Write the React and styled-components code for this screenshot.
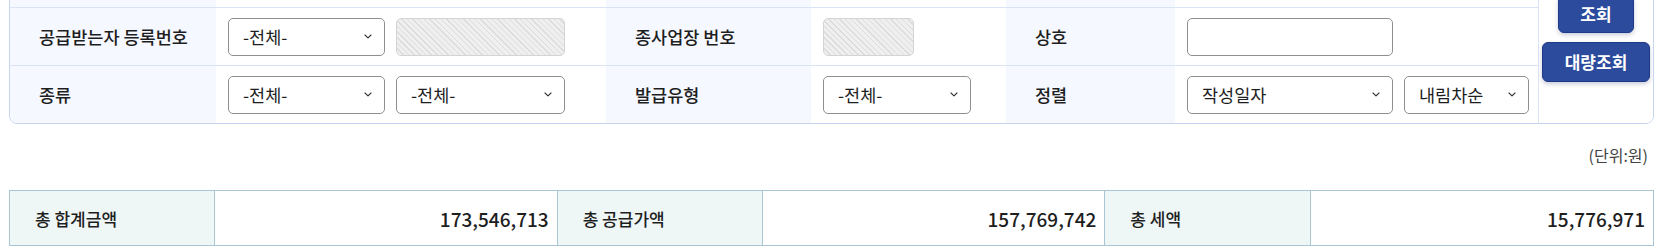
import React from "react"
import styled, { createGlobalStyle } from "styled-components"

const GlobalStyle = createGlobalStyle`
  html, body { margin: 0; padding: 0; background: #fff; }
  body {
    font-family: "Noto Sans CJK KR", "Noto Sans", sans-serif;
    color: #222;
    overflow: hidden;
  }
`

const Chevron = () => (
  <svg width="8" height="5" viewBox="0 0 8 5" fill="none">
    <polyline points="1,1 4,3.8 7,1" stroke="#333" strokeWidth="1.1" strokeLinecap="round" strokeLinejoin="round" />
  </svg>
)

const App = () => {
  return (
    <Page>
      <GlobalStyle />
      <Panel>
        <Rows>
          <Row>
            <Label />
            <Cell />
            <Label />
            <Cell />
            <Label />
            <Cell />
          </Row>
          <Row>
            <Label>공급받는자 등록번호</Label>
            <Cell>
              <Select w={157}><span>-전체-</span><Chevron /></Select>
              <Hatched w={169} />
            </Cell>
            <Label>종사업장 번호</Label>
            <Cell>
              <Hatched w={91} />
            </Cell>
            <Label>상호</Label>
            <Cell>
              <TextInput w={206} />
            </Cell>
          </Row>
          <Row last>
            <Label>종류</Label>
            <Cell>
              <Select w={157}><span>-전체-</span><Chevron /></Select>
              <Select w={169}><span>-전체-</span><Chevron /></Select>
            </Cell>
            <Label>발급유형</Label>
            <Cell>
              <Select w={148}><span>-전체-</span><Chevron /></Select>
            </Cell>
            <Label>정렬</Label>
            <Cell>
              <Select w={206}><span>작성일자</span><Chevron /></Select>
              <Select w={125}><span>내림차순</span><Chevron /></Select>
            </Cell>
          </Row>
        </Rows>
        <ButtonCol>
          <Button w={76} h={38}>조회</Button>
          <Button w={108} h={40}>대량조회</Button>
        </ButtonCol>
      </Panel>
      <Unit>(단위:원)</Unit>
      <Summary>
        <SumLabel>총 합계금액</SumLabel>
        <SumValue>173,546,713</SumValue>
        <SumLabel>총 공급가액</SumLabel>
        <SumValue>157,769,742</SumValue>
        <SumLabel>총 세액</SumLabel>
        <SumValue last>15,776,971</SumValue>
      </Summary>
    </Page>
  )
}
export default App

const Page = styled.div`
  width: 1660px;
  height: 250px;
  padding: 0 6px 0 9px;
  box-sizing: border-box;
  overflow: hidden;
`
const Panel = styled.div`
  margin-top: -51px;
  display: flex;
  border: 1px solid #c6d4ef;
  border-radius: 8px;
  overflow: hidden;
`
const Rows = styled.div`
  flex: 1;
  display: flex;
  flex-direction: column;
`
const Row = styled.div`
  display: grid;
  grid-template-columns: 206px 390px 205px 195px 169px 1fr;
  height: 57px;
  border-bottom: ${(p) => (p.last ? "none" : "1px solid #dbe4f6")};
`
const Label = styled.div`
  background: #f5f8fe;
  display: flex;
  align-items: center;
  padding-left: 29px;
  font-size: 17.5px;
  font-weight: 500;
  color: #1e1e1e;
  white-space: nowrap;
`
const Cell = styled.div`
  background: #fff;
  display: flex;
  align-items: center;
  gap: 11px;
  padding-left: 12px;
`
const Select = styled.div`
  width: ${(p) => p.w}px;
  height: 38px;
  box-sizing: border-box;
  border: 1px solid #8f8f8f;
  border-radius: 5px;
  background: #fff;
  display: flex;
  align-items: center;
  justify-content: space-between;
  padding: 0 12px 0 14px;
  font-size: 17.5px;
  color: #1e1e1e;
  span { line-height: 1; }
`
const Hatched = styled.div`
  width: ${(p) => p.w}px;
  height: 38px;
  box-sizing: border-box;
  border: 1px solid #d4d4d4;
  border-radius: 5px;
  background: repeating-linear-gradient(45deg, #dcdcdc 0 1px, #efefef 1px 4px);
`
const TextInput = styled.div`
  width: ${(p) => p.w}px;
  height: 38px;
  box-sizing: border-box;
  border: 1px solid #8f8f8f;
  border-radius: 5px;
  background: #fff;
`
const ButtonCol = styled.div`
  width: 114px;
  border-left: 1px solid #dbe4f6;
  display: flex;
  flex-direction: column;
  align-items: center;
  justify-content: center;
  gap: 9px;
  padding-top: 3px;
  background: #fff;
`
const Button = styled.div`
  width: ${(p) => p.w}px;
  height: ${(p) => p.h}px;
  box-sizing: border-box;
  background: #2c4b9d;
  border: 1px solid #1f3a86;
  border-radius: 6px;
  box-shadow: 0 2px 4px rgba(30, 50, 110, 0.25);
  color: #fff;
  font-size: 17px;
  font-weight: 700;
  display: flex;
  align-items: center;
  justify-content: center;
`
const Unit = styled.div`
  margin-top: 21px;
  height: 20px;
  line-height: 20px;
  text-align: right;
  padding-right: 6px;
  font-size: 16px;
  color: #444;
`
const Summary = styled.div`
  margin-top: 25px;
  display: grid;
  grid-template-columns: 12.5% 20.833% 12.5% 20.833% 12.5% 1fr;
  border: 1px solid #a9c7d3;
  height: 56px;
  box-sizing: border-box;
`
const SumLabel = styled.div`
  background: #eef6f6;
  border-right: 1px solid #a9c7d3;
  display: flex;
  align-items: center;
  padding-left: 25px;
  font-size: 17px;
  font-weight: 500;
  color: #1e1e1e;
`
const SumValue = styled.div`
  background: #fff;
  border-right: ${(p) => (p.last ? "none" : "1px solid #a9c7d3")};
  display: flex;
  align-items: center;
  justify-content: flex-end;
  padding-right: 8px;
  font-size: 19px;
  font-weight: 500;
  color: #1e1e1e;
`
